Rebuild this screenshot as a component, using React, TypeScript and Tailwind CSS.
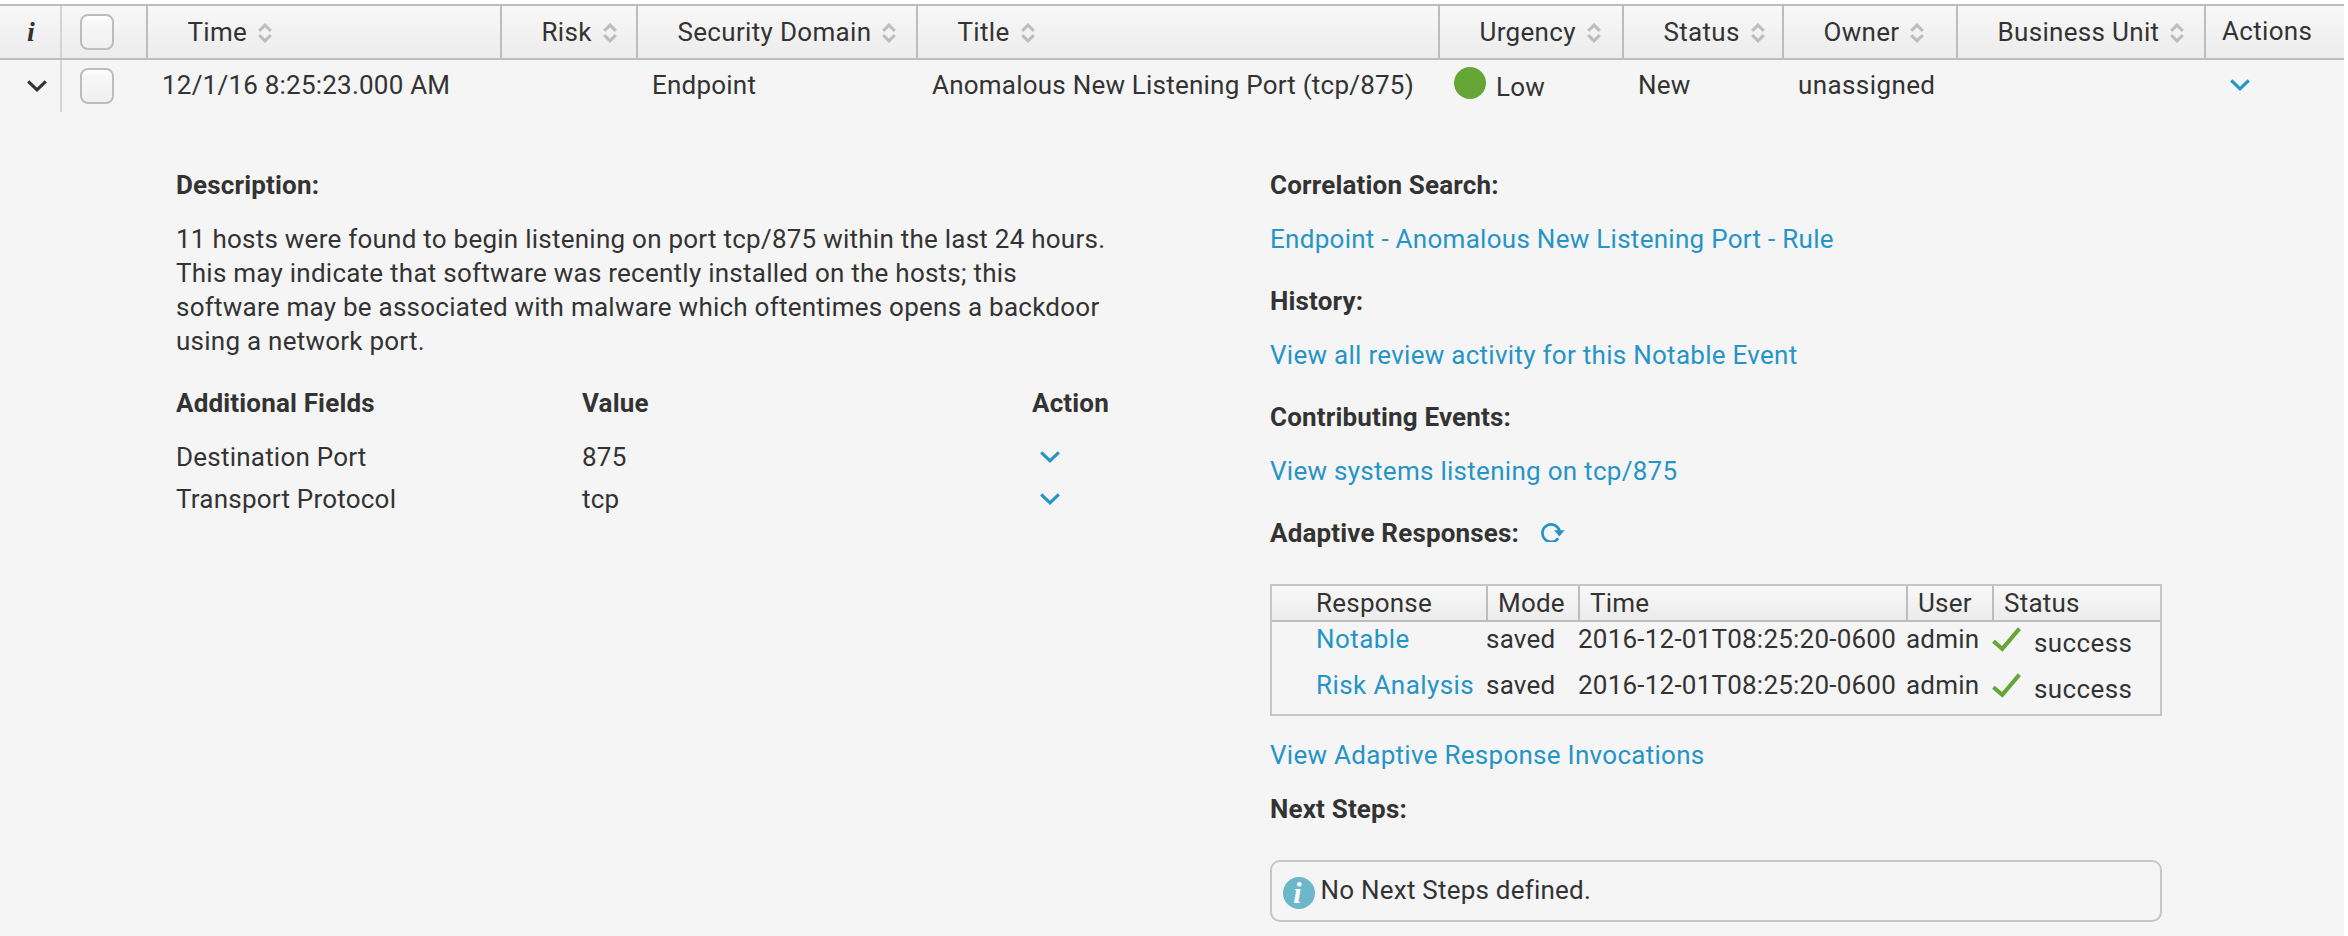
import type { ReactNode } from "react";

function SortIcon() {
  return (
    <svg className="ml-[11px] mt-px h-5 w-[14px] shrink-0" viewBox="0 0 14 20" fill="none" stroke="#bdbdbd" strokeWidth="3">
      <path d="M1.2 7.8 7 2.2l5.8 5.6M1.2 12.2 7 17.8l5.8-5.6" />
    </svg>
  );
}

function Chevron({ className = "" }: { className?: string }) {
  return (
    <svg className={`h-3 w-5 shrink-0 ${className}`} viewBox="0 0 20 12" fill="none" stroke="currentColor" strokeWidth="3.2">
      <path d="M1.2 1.4 10 9.8l8.8-8.4" />
    </svg>
  );
}

function CheckIcon() {
  return (
    <svg className="h-[25px] w-[30px] shrink-0" viewBox="0 0 30 25" fill="none" stroke="#65a637" strokeWidth="4">
      <path d="M1.4 14.2 10.3 21.8 27.4 1.6" />
    </svg>
  );
}

function Checkbox() {
  return (
    <span className="block h-9 w-[34px] shrink-0 rounded-[8px] border-2 border-[#bdbdbd] bg-linear-to-b from-white via-[#f7f7f7] via-20% to-[#f0f0f0]" />
  );
}

function HeadCell({ children }: { children: ReactNode }) {
  return (
    <div className="flex items-center border-r-2 border-[#bdbdbd] pl-[39.5px] tracking-[0.32px]">
      <span>{children}</span>
      <SortIcon />
    </div>
  );
}

function Heading({ children }: { children: ReactNode }) {
  return <h3 className="mb-5 font-bold tracking-[0.17px]">{children}</h3>;
}

function Link({ children }: { children: ReactNode }) {
  return (
    <a href="#" className="block tracking-[0.28px] text-[#2694c6]">
      {children}
    </a>
  );
}

const columns = "grid grid-cols-[62px_86px_354px_136px_280px_522px_184px_160px_174px_248px_1fr]";
const fieldColumns = "grid grid-cols-[406px_450px_1fr]";
const responseColumns = "grid grid-cols-[216px_92px_328px_86px_1fr]";

const fields = [
  { label: "Destination Port", value: "875" },
  { label: "Transport Protocol", value: "tcp" },
];

const responses = ["Notable", "Risk Analysis"];

export default function App() {
  return (
    <div className="flex h-[936px] w-[2348px] flex-col overflow-hidden whitespace-nowrap border-t-4 border-r-4 border-white bg-[#f5f5f5] font-['Roboto',sans-serif] text-[26px] leading-[34px] tracking-[0.22px] text-[#333]">
      <div className={`${columns} h-14 border-y-2 border-[#bdbdbd] bg-linear-to-b from-[#f8f8f8] to-[#ececec]`}>
        <div className="flex items-center border-r-2 border-[#d4d4d4] pl-[27px] font-['Liberation_Serif',serif] text-[28px] font-bold italic">
          i
        </div>
        <div className="flex items-center border-r-2 border-[#bdbdbd] pl-[18px]">
          <Checkbox />
        </div>
        <HeadCell>Time</HeadCell>
        <HeadCell>Risk</HeadCell>
        <HeadCell>Security Domain</HeadCell>
        <HeadCell>Title</HeadCell>
        <HeadCell>Urgency</HeadCell>
        <HeadCell>Status</HeadCell>
        <HeadCell>Owner</HeadCell>
        <HeadCell>Business Unit</HeadCell>
        <div className="pt-2 pl-4 tracking-[0.32px]">Actions</div>
      </div>

      <div className={`${columns} h-[52px]`}>
        <div className="border-r-2 border-[#d4d4d4] pt-5 pl-[26.5px]">
          <Chevron />
        </div>
        <div className="pt-2 pl-[18px]">
          <Checkbox />
        </div>
        <div className="pt-2 pl-[14px]">12/1/16 8:25:23.000 AM</div>
        <div />
        <div className="pt-2 pl-[14px]">Endpoint</div>
        <div className="pt-2 pl-[14px]">Anomalous New Listening Port (tcp/875)</div>
        <div className="flex items-start pl-[14px]">
          <span className="mt-[7px] size-8 rounded-full bg-[#65a637]" />
          <span className="mt-2.5 ml-2.5">Low</span>
        </div>
        <div className="pt-2 pl-[14px]">New</div>
        <div className="pt-2 pl-[14px] tracking-[0.4px]">unassigned</div>
        <div />
        <div className="pt-[19px] pl-6 text-[#2694c6]">
          <Chevron />
        </div>
      </div>

      <div className="grid grid-cols-[1094px_892px] pt-14 pl-44">
        <section>
          <Heading>Description:</Heading>
          <p className="tracking-[0.245px]">
            11 hosts were found to begin listening on port tcp/875 within the last 24 hours.
            <br />
            This may indicate that software was recently installed on the hosts; this
            <br />
            software may be associated with malware which oftentimes opens a backdoor
            <br />
            using a network port.
          </p>
          <div className={`${fieldColumns} mt-7 mb-5 font-bold tracking-[0.17px]`}>
            <span>Additional Fields</span>
            <span>Value</span>
            <span>Action</span>
          </div>
          <div className="flex flex-col gap-2">
            {fields.map((field) => (
              <div key={field.label} className={fieldColumns}>
                <span>{field.label}</span>
                <span>{field.value}</span>
                <span className="pt-[11px] pl-2 text-[#2694c6]">
                  <Chevron />
                </span>
              </div>
            ))}
          </div>
        </section>

        <section>
          <Heading>Correlation Search:</Heading>
          <Link>Endpoint - Anomalous New Listening Port - Rule</Link>
          <div className="mt-7">
            <Heading>History:</Heading>
            <Link>View all review activity for this Notable Event</Link>
          </div>
          <div className="mt-7">
            <Heading>Contributing Events:</Heading>
            <Link>View systems listening on tcp/875</Link>
          </div>
          <div className="mt-7 flex items-start">
            <h3 className="font-bold tracking-[0.17px]">Adaptive Responses:</h3>
            <svg className="mt-1.5 ml-[22px] h-5 w-6 text-[#2694c6]" viewBox="0 0 24 20" fill="none">
              <path d="M17.2 16.2A8.7 8.7 0 1 1 18.6 9" stroke="currentColor" strokeWidth="2.7" />
              <path d="M13 8.2h10.6L18.4 14.6z" fill="currentColor" />
            </svg>
          </div>

          <div className="mt-[34px] h-[132px] border-2 border-[#c6c6c6]">
            <div className={`${responseColumns} h-9 border-b-2 border-[#bdbdbd] bg-linear-to-b from-[#f8f8f8] to-[#ececec]`}>
              <span className="border-r-2 border-[#bdbdbd] pl-11">Response</span>
              <span className="border-r-2 border-[#bdbdbd] pl-[10px]">Mode</span>
              <span className="border-r-2 border-[#bdbdbd] pl-[10px]">Time</span>
              <span className="border-r-2 border-[#bdbdbd] pl-[10px]">User</span>
              <span className="pl-[10px]">Status</span>
            </div>
            {responses.map((name) => (
              <div key={name} className={`${responseColumns} h-[46px]`}>
                <span className="pl-11">
                  <a href="#" className="tracking-[0.42px] text-[#2694c6]">
                    {name}
                  </a>
                </span>
                <span className="-ml-0.5">saved</span>
                <span className="-ml-0.5">2016-12-01T08:25:20-0600</span>
                <span className="-ml-0.5">admin</span>
                <span className="-ml-0.5 flex items-start">
                  <span className="pt-[5px]">
                    <CheckIcon />
                  </span>
                  <span className="mt-1 ml-3 tracking-[0.4px]">success</span>
                </span>
              </div>
            ))}
          </div>

          <div className="mt-[22px]">
            <Link>View Adaptive Response Invocations</Link>
          </div>
          <h3 className="mt-5 font-bold tracking-[0.17px]">Next Steps:</h3>
          <div className="mt-[34px] flex h-[62px] items-start rounded-[10px] border-2 border-[#c6c6c6] pl-[10.5px]">
            <span className="mt-[15px] flex size-8 items-center justify-center rounded-full bg-[#6cb8ca] pr-0.5 font-['Liberation_Serif',serif] text-[30px] font-bold italic text-white">
              i
            </span>
            <span className="mt-[11px] ml-1.5">No Next Steps defined.</span>
          </div>
        </section>
      </div>
    </div>
  );
}
